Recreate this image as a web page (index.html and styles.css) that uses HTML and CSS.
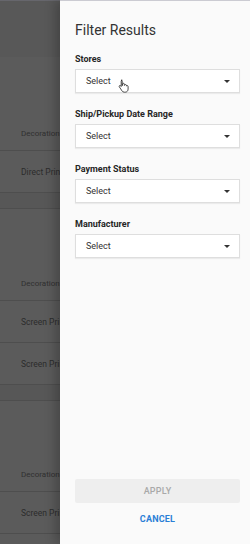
FILE: index.html
```html
<!DOCTYPE html>
<html>
<head>
<meta charset="utf-8">
<link rel="stylesheet" href="styles.css">
</head>
<body>
<div class="page">
  <div class="page-header"></div>
  <div class="section first">
    <div class="sec-head">Decoration</div>
    <div class="row">Direct Print</div>
  </div>
  <div class="band"></div>
  <div class="section">
    <div class="sec-head">Decoration</div>
    <div class="row">Screen Print</div>
    <div class="row">Screen Print</div>
  </div>
  <div class="band"></div>
  <div class="section third">
    <div class="sec-head">Decoration</div>
    <div class="row">Screen Print</div>
  </div>
</div>

<aside class="drawer">
  <h1 class="title">Filter Results</h1>
  <div class="fields">
    <div class="field">
      <div class="label">Stores</div>
      <div class="select"><span>Select</span><span class="caret"></span></div>
    </div>
    <div class="field">
      <div class="label">Ship/Pickup Date Range</div>
      <div class="select"><span>Select</span><span class="caret"></span></div>
    </div>
    <div class="field">
      <div class="label">Payment Status</div>
      <div class="select"><span>Select</span><span class="caret"></span></div>
    </div>
    <div class="field">
      <div class="label">Manufacturer</div>
      <div class="select"><span>Select</span><span class="caret"></span></div>
    </div>
  </div>
  <div class="footer">
    <div class="apply">APPLY</div>
    <div class="cancel">CANCEL</div>
  </div>
  <svg class="cursor" width="11" height="14" viewBox="0 0 11 14">
    <path d="M3.2 1.2c.6 0 1 .4 1 1v4.3l.4-.1V5.2c0-.5.4-.9.9-.9s.9.4.9.9v1.2l.3-.1c.1-.4.4-.7.9-.7.5 0 .9.4.9.9v.6c.1-.3.4-.5.8-.5.5 0 .8.4.8.9v2.6c0 1.7-1.2 3.1-2.9 3.1H6.3c-1 0-1.8-.5-2.300-1.3L1.3 7.8c-.3-.4-.2-.9.2-1.2.4-.3.9-.2 1.2.2l.5.7V2.2c0-.6.4-1 1-1z" fill="#fff" stroke="#222" stroke-width=".8"/>
  </svg>
</aside>
</body>
</html>
```

FILE: styles.css
```css
html, body {
  margin: 0;
  padding: 0;
}
body {
  width: 250px;
  height: 544px;
  overflow: hidden;
  position: relative;
  background: #5b5b5b;
  font-family: Roboto, "Liberation Sans", sans-serif;
}
.page {
  display: flex;
  flex-direction: column;
  width: 250px;
  border-top: 1px solid #66666c;
}
.page-header {
  height: 56px;
  background: #585858;
}
.section {
  display: flex;
  flex-direction: column;
}
.sec-head {
  height: 92px;
  box-sizing: border-box;
  padding-left: 21px;
  display: flex;
  align-items: flex-end;
  padding-bottom: 12px;
  font-size: 8px;
  color: #303030;
  border-bottom: 1px solid #4e4e4e;
}
.section.first .sec-head {
  height: 94px;
}
.section.third .sec-head {
  height: 91px;
}
.row {
  height: 42px;
  box-sizing: border-box;
  padding-left: 21px;
  display: flex;
  align-items: center;
  font-size: 8.5px;
  color: #2c2c2c;
  border-bottom: 1px solid #4e4e4e;
}
.band {
  height: 15px;
  background: #575757;
  border-bottom: 1px solid #4e4e4e;
}
.drawer {
  position: absolute;
  top: 0;
  right: 0;
  width: 190px;
  height: 544px;
  box-sizing: border-box;
  background: #fafafa;
  border-top: 1px solid #cbcbd2;
  padding: 20px 10px 18px 15px;
  display: flex;
  flex-direction: column;
  box-shadow: -5px 0 10px rgba(0, 0, 0, 0.22);
}
.title {
  margin: 0;
  font-size: 14px;
  line-height: 18px;
  font-weight: 400;
  color: #333;
}
.fields {
  margin-top: 14px;
  display: flex;
  flex-direction: column;
  gap: 15px;
}
.field {
  display: flex;
  flex-direction: column;
  gap: 4px;
}
.label {
  font-size: 9px;
  line-height: 12px;
  font-weight: 700;
  color: #262626;
}
.select {
  height: 24px;
  box-sizing: border-box;
  border: 1px solid #dedede;
  background: #fff;
  box-shadow: 0 1px 1px rgba(0, 0, 0, 0.06);
  display: flex;
  align-items: center;
  justify-content: space-between;
  padding: 0 9px 0 10px;
  font-size: 9px;
  color: #333;
}
.caret {
  width: 0;
  height: 0;
  border-left: 3px solid transparent;
  border-right: 3px solid transparent;
  border-top: 3px solid #333;
}
.footer {
  margin-top: auto;
  display: flex;
  flex-direction: column;
  align-items: stretch;
  gap: 9px;
}
.apply {
  height: 24px;
  background: #eeeeee;
  border-radius: 2px;
  display: flex;
  align-items: center;
  justify-content: center;
  font-size: 9px;
  font-weight: 500;
  color: #a9a9a9;
  letter-spacing: 0.2px;
}
.cancel {
  text-align: center;
  font-size: 9px;
  line-height: 14px;
  font-weight: 700;
  color: #2a7fd6;
  letter-spacing: 0.2px;
}
.cursor {
  position: absolute;
  left: 58px;
  top: 78px;
}
```
